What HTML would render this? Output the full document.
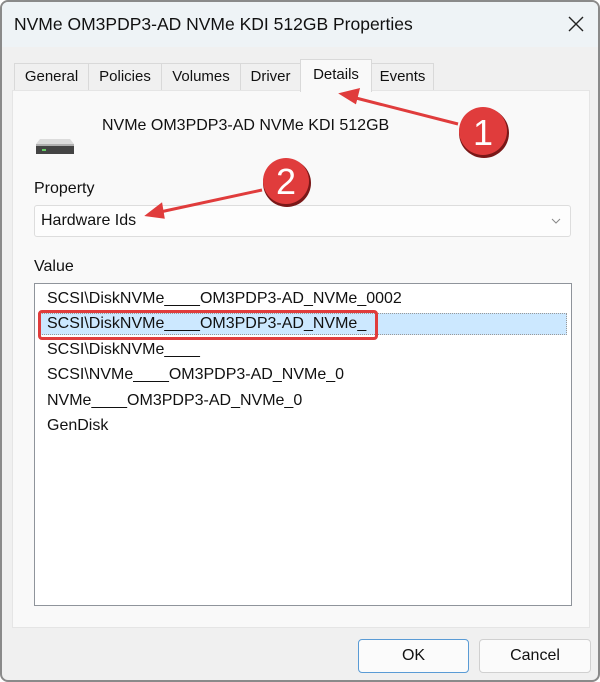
<!DOCTYPE html>
<html><head><style>
*{margin:0;padding:0;box-sizing:border-box}
body{width:600px;height:682px;background:#fff;font-family:"Liberation Sans",sans-serif;color:#111;position:relative;overflow:hidden}
.win{position:absolute;left:0;top:0;width:600px;height:682px;border:2px solid #8a8a8a;border-radius:8px;background:#f0f0f0;overflow:hidden}
.title{position:absolute;left:0;top:0;width:100%;height:45px;background:#eef3f6}
.title span{position:absolute;left:12px;top:12px;font-size:17.5px}
.x{position:absolute;left:566px;top:14px}
.tab{position:absolute;top:61px;height:28px;border:1px solid #d9d9d9;border-bottom:none;background:#f0f0f0;font-size:15px;text-align:center;line-height:26px}
.panel{position:absolute;left:10px;top:88px;width:578px;height:538px;background:#f9f9f9;border:1px solid #e5e5e5}
.t{position:absolute;font-size:16px;white-space:nowrap}
.btn{position:absolute;top:637px;height:34px;border:1px solid #d0d0d0;border-radius:4px;background:#fbfbfb;font-size:16px;text-align:center;line-height:32px}
</style></head><body>
<div class="win">
<div class="title"><span>NVMe OM3PDP3-AD NVMe KDI 512GB Properties</span>
<svg class="x" width="16" height="16"><path d="M1 1L15 15M15 1L1 15" stroke="#222" stroke-width="1.4"/></svg></div>
<div class="tab" style="left:12px;width:75px">General</div>
<div class="tab" style="left:86px;width:74px">Policies</div>
<div class="tab" style="left:159px;width:80px">Volumes</div>
<div class="tab" style="left:238px;width:61px">Driver</div>
<div class="tab" style="left:369px;width:63px">Events</div>
<div class="panel"></div>
<div class="tab" style="left:298px;top:57px;height:33px;width:72px;background:#f9f9f9;line-height:30px">Details</div>
<svg style="position:absolute;left:32px;top:132px" width="44" height="26"><path d="M6 5h30l4 5v8H2v-8z" fill="#dcdcdc"/><path d="M2 11h38v9H2z" fill="#444"/><path d="M2 10h38v2H2z" fill="#b0b0b0"/><rect x="8" y="15" width="4" height="2" fill="#6c6"/></svg>
<div class="t" style="left:100px;top:115px">NVMe OM3PDP3-AD NVMe KDI 512GB</div>
<div class="t" style="left:32px;top:178px">Property</div>
<div style="position:absolute;left:32px;top:203px;width:537px;height:32px;background:#fdfdfd;border:1px solid #ddd;border-radius:3px"></div>
<div class="t" style="left:39px;top:210px">Hardware Ids</div>
<svg style="position:absolute;left:549px;top:215px" width="10" height="8"><path d="M1 2l4 4 4-4" fill="none" stroke="#888"/></svg>
<div class="t" style="left:32px;top:256px">Value</div>
<div style="position:absolute;left:32px;top:281px;width:538px;height:323px;background:#fff;border:1px solid #8f949b"></div>
<div style="position:absolute;left:36px;top:311px;width:529px;height:22px;background:#cce8ff;border:1px dotted #999"></div>
<div class="t" style="left:45px;top:288px">SCSI\DiskNVMe____OM3PDP3-AD_NVMe_0002</div>
<div class="t" style="left:45px;top:313px">SCSI\DiskNVMe____OM3PDP3-AD_NVMe_</div>
<div class="t" style="left:45px;top:339px">SCSI\DiskNVMe____</div>
<div class="t" style="left:45px;top:364px">SCSI\NVMe____OM3PDP3-AD_NVMe_0</div>
<div class="t" style="left:45px;top:390px">NVMe____OM3PDP3-AD_NVMe_0</div>
<div class="t" style="left:45px;top:415px">GenDisk</div>
<div style="position:absolute;left:36px;top:308px;width:340px;height:30px;border:3px solid #e03c3c;border-radius:4px"></div>
<div class="btn" style="left:356px;width:111px;border-color:#5a9bd5">OK</div>
<div class="btn" style="left:477px;width:112px">Cancel</div>
</div>
<svg style="position:absolute;left:0;top:0" width="600" height="682">
<g stroke="#e03c3c" stroke-width="3" fill="#e03c3c">
<line x1="458" y1="124" x2="352" y2="97"/><path d="M342 94l16-4-3 12z"/>
<line x1="262" y1="190" x2="160" y2="212"/><path d="M148 215l13-10 2 12z"/>
</g>
<circle cx="484" cy="133" r="25" fill="#7a1818"/>
<circle cx="483" cy="131" r="24" fill="#e03c3c"/>
<text x="483" y="145" font-size="36" fill="#fff" text-anchor="middle" font-family="Liberation Sans">1</text>
<circle cx="287" cy="183" r="24" fill="#7a1818"/>
<circle cx="286" cy="181" r="23" fill="#e03c3c"/>
<text x="286" y="194" font-size="36" fill="#fff" text-anchor="middle" font-family="Liberation Sans">2</text>
</svg>
</body></html>
